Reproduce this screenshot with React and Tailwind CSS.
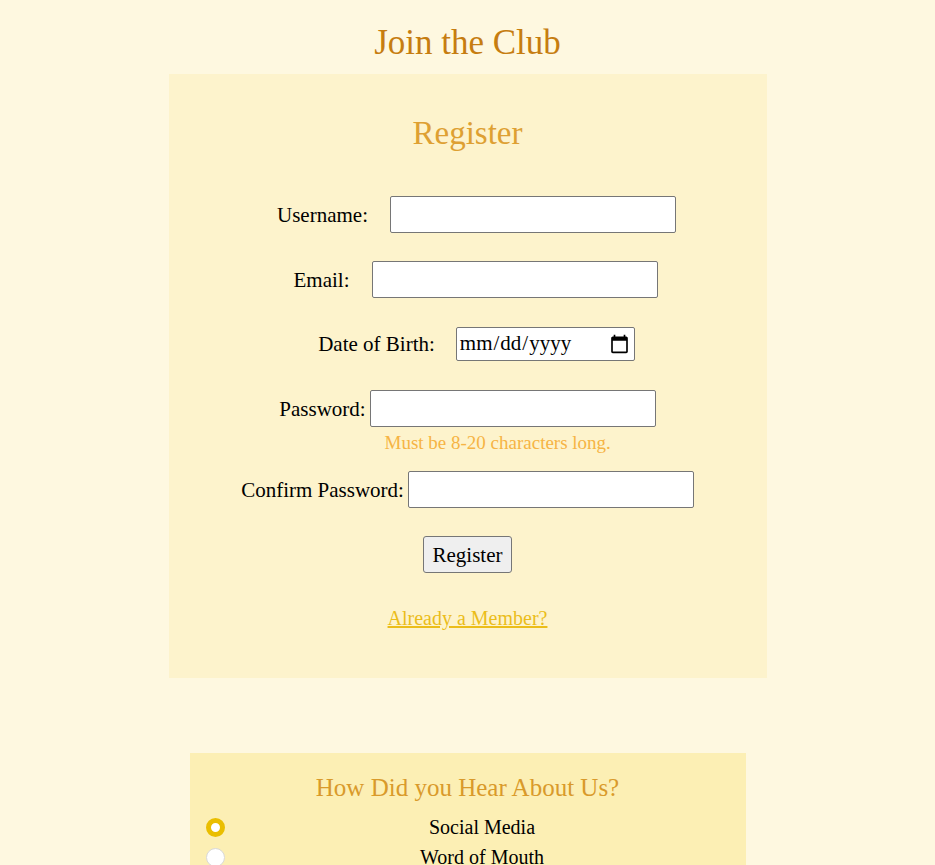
import React from "react";

const inputCls =
  "w-[286px] h-[37px] bg-white border border-[#767676] rounded-[2px] px-[2px] text-[21px] text-black";

function Row({ label, children, className = "", gap = "gap-[22px]" }) {
  return (
    <div className={`flex justify-center items-center ${gap} ${className}`}>
      <label className="text-[21px] leading-[24px] text-black whitespace-nowrap">{label}</label>
      {children}
    </div>
  );
}

export default function App() {
  const options = ["Social Media", "Word of Mouth", "Advertisement", "Other"];
  return (
    <div className="min-h-screen bg-[#fef8e0] font-['Liberation_Serif',serif] pt-[23px] pb-[40px]">
      <h1 className="text-center text-[35px] leading-[40px] h-[40px] text-[#c67d10] mb-[11px]">
        Join the Club
      </h1>

      <div className="w-[598px] mx-auto bg-[#fdf3cc] pt-[40px] pb-[49px] flex flex-col">
        <h2 className="text-center text-[33px] leading-[38px] text-[#dea032]">Register</h2>

        <Row label="Username:" className="mt-[44px] h-[37px] pl-[18px]">
          <input type="text" className={inputCls} />
        </Row>

        <Row label="Email:" className="mt-[28px] h-[37px] pl-[16px]">
          <input type="email" className={inputCls} />
        </Row>

        <Row label="Date of Birth:" className="mt-[29px] h-[34px] pl-[18px]" gap="gap-[21px]">
          <input
            type="date"
            className="w-[179px] h-[34px] bg-white border border-[#767676] rounded-[2px] px-[2px] text-[21px] text-black font-['Liberation_Serif',serif]"
          />
        </Row>

        <Row label="Password:" className="mt-[29px] h-[37px]" gap="gap-[4px]">
          <input type="password" className={inputCls} />
        </Row>

        <div className="mt-[5px] h-[21px] pl-[216px] text-[19px] leading-[21px] text-[#f6b444] whitespace-nowrap">
          Must be 8-20 characters long.
        </div>

        <Row label="Confirm Password:" className="mt-[18px] h-[37px]" gap="gap-[4px]">
          <input type="password" className={inputCls} />
        </Row>

        <div className="mt-[28px] flex justify-center">
          <button className="h-[37px] px-[9px] bg-[#efefef] border border-[#767676] rounded-[3px] text-[21px] leading-[24px] text-black">
            Register
          </button>
        </div>

        <div className="mt-[34px] flex justify-center">
          <a href="#" className="text-[20px] leading-[22px] text-[#ebbd1a] underline">
            Already a Member?
          </a>
        </div>
      </div>

      <div className="w-[556px] mx-auto mt-[75px] bg-[#fcefb4] pt-[20px] pb-[20px]">
        <h3 className="text-center text-[25px] leading-[29px] text-[#d99a2b]">
          How Did you Hear About Us?
        </h3>
        <div className="mt-[10px] flex flex-col">
          {options.map((o, i) => (
            <label key={o} className="flex items-center h-[30px] pl-[16px] pr-[6px]">
              <input
                type="radio"
                name="hear"
                defaultChecked={i === 0}
                className="appearance-none w-[19px] h-[19px] rounded-full bg-white border border-[#d9d9d9] checked:border-[5.5px] checked:border-[#eabe00] shrink-0"
              />
              <span className="flex-1 text-center text-[20px] leading-[23px] text-black">{o}</span>
            </label>
          ))}
        </div>
      </div>
    </div>
  );
}
